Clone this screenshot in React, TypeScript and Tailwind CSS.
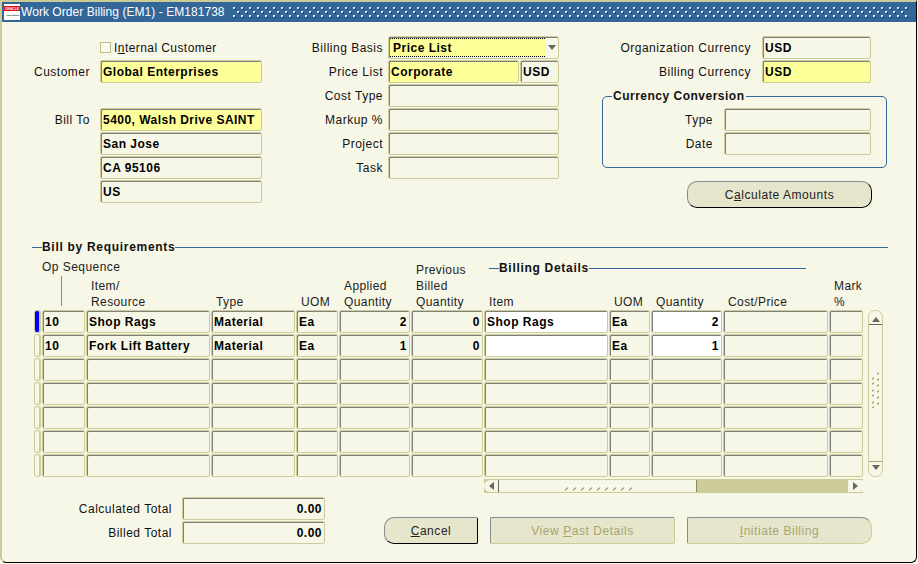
import type { ReactNode } from 'react'

const columns = [43, 124, 84, 42, 71, 72, 124, 41, 71, 105, 34]
const colAlign = ['', '', '', '', 'r', 'r', '', '', 'r', '', '']

const rows: string[][] = [
  ['10', 'Shop Rags', 'Material', 'Ea', '2', '0', 'Shop Rags', 'Ea', '2', '', ''],
  ['10', 'Fork Lift Battery', 'Material', 'Ea', '1', '0', '', 'Ea', '1', '', ''],
  ['', '', '', '', '', '', '', '', '', '', ''],
  ['', '', '', '', '', '', '', '', '', '', ''],
  ['', '', '', '', '', '', '', '', '', '', ''],
  ['', '', '', '', '', '', '', '', '', '', ''],
  ['', '', '', '', '', '', '', '', '', '', ''],
]

function Field({
  value,
  width,
  bg = 'bg-[#f7f7e7]',
  right,
  tight,
}: {
  value?: string
  width: number
  bg?: string
  right?: boolean
  tight?: boolean
}) {
  return (
    <div
      style={{ width }}
      className={`h-[23px] shrink-0 overflow-hidden whitespace-nowrap rounded-[2px] border border-[#cccc99] px-[2px] text-[12px] font-bold leading-[22px] text-black shadow-[inset_1px_1px_0_#7f7f7f] ${bg} ${right ? 'text-right' : ''} ${tight ? 'tracking-[0.47px]' : 'tracking-[0.5px]'}`}
    >
      {value}
    </div>
  )
}

function Row({
  label,
  labelWidth,
  gap,
  children,
}: {
  label?: string
  labelWidth: number
  gap: number
  children: ReactNode
}) {
  return (
    <div className="flex h-[23px] items-center">
      <div style={{ width: labelWidth, marginRight: gap }} className="shrink-0 whitespace-nowrap text-right text-[12px] tracking-[0.5px] text-[#111]">
        {label}
      </div>
      {children}
    </div>
  )
}

function HeadCell({ width, lines }: { width: number; lines: string[] }) {
  return (
    <div style={{ width }} className="shrink-0 whitespace-nowrap pl-[5px] text-[12px] leading-[16px] tracking-[0.4px] text-[#222]">
      {lines.map((l) => (
        <div key={l}>{l}</div>
      ))}
    </div>
  )
}

function Arrow({ dir }: { dir: 'up' | 'down' | 'left' | 'right' }) {
  const points = {
    up: '0,5 8,5 4,0',
    down: '0,0 8,0 4,5',
    left: '5,0 5,8 0,4',
    right: '0,0 0,8 5,4',
  }[dir]
  const size = dir === 'up' || dir === 'down' ? 'h-[5px] w-[8px]' : 'h-[8px] w-[5px]'
  const box = dir === 'up' || dir === 'down' ? '0 0 8 5' : '0 0 5 8'
  return (
    <svg viewBox={box} className={size}>
      <polygon points={points} fill="#666660" />
    </svg>
  )
}

function GripH() {
  const xs = [0, 8, 16, 24, 32, 40, 48, 56, 64]
  return (
    <svg width="68" height="6" viewBox="0 0 68 6">
      {xs.map((x) => (
        <path key={x} d={`M${x + 1} 5h1v-1h1v-1h1`} stroke="#8a8a5c" fill="none" strokeWidth="1" />
      ))}
      {xs.slice(0, 8).map((x) => (
        <rect key={x} x={x + 5} y="0" width="2" height="2" fill="#ffffff" />
      ))}
    </svg>
  )
}

function GripV() {
  const ys = [0, 12, 24]
  return (
    <svg width="9" height="36" viewBox="0 0 9 36">
      {ys.map((y) => (
        <g key={y}>
          <path d={`M1 ${y + 7}h1v-1h1`} stroke="#8a8a5c" fill="none" />
          <path d={`M6 ${y + 2}h1v-1h1`} stroke="#8a8a5c" fill="none" />
          <path d={`M1 ${y + 12}h1v-1h1`} stroke="#8a8a5c" fill="none" />
          <path d={`M6 ${y + 8}h1v-1h1`} stroke="#8a8a5c" fill="none" />
        </g>
      ))}
    </svg>
  )
}

function TitleTexture() {
  return (
    <svg className="h-[11px] min-w-0 flex-1" aria-hidden="true">
      <defs>
        <pattern id="title-dots" width="8" height="8" patternUnits="userSpaceOnUse">
          <rect x="0" y="0" width="2" height="2" fill="#eef2f6" />
          <rect x="2" y="2" width="1" height="1" fill="#10233d" />
          <rect x="1" y="1" width="1" height="1" fill="#8fa6c2" />
          <rect x="4" y="4" width="2" height="2" fill="#eef2f6" />
          <rect x="6" y="6" width="1" height="1" fill="#10233d" />
          <rect x="5" y="5" width="1" height="1" fill="#8fa6c2" />
        </pattern>
      </defs>
      <rect width="100%" height="100%" fill="url(#title-dots)" />
    </svg>
  )
}

export default function App() {
  return (
    <div className="h-[564px] w-[918px] overflow-hidden bg-[#f7f7e7] font-['Liberation_Sans',Arial,sans-serif]">
      <div className="flex h-[563px] w-[917px] flex-col overflow-hidden rounded-b-[6px] border-r border-b border-l-2 border-t-2 border-r-black border-b-black border-l-[#cccc99] border-t-[#cccc99] bg-[#f7f7e7]">
        {/* title bar */}
        <div className="flex h-[20px] shrink-0 items-center bg-[#336699] pr-[8px] pl-[2px]">
          <svg width="16" height="16" viewBox="0 0 16 16" className="shrink-0">
            <rect width="16" height="16" fill="#ffffff" />
            <rect x="0" y="2" width="16" height="5" fill="#e01010" />
            <text x="1" y="6" fontSize="3.6" fontWeight="700" fill="#ffffff" fontFamily="Liberation Sans" textLength="14" lengthAdjust="spacingAndGlyphs">
              ORACLE
            </text>
            <text x="2" y="12" fontSize="2.2" fontWeight="700" fill="#222222" fontFamily="Liberation Sans">
              Applications
            </text>
          </svg>
          <span className="ml-[1px] whitespace-nowrap text-[12px] tracking-[0.05px] text-white">Work Order Billing (EM1) - EM181738</span>
          <div className="ml-[8px] flex min-w-0 flex-1 items-center">
            <TitleTexture />
          </div>
        </div>

        {/* header form */}
        <div className="flex shrink-0 pt-[14px] pl-0">
          <div className="flex w-[260px] shrink-0 flex-col gap-[1px]">
            <div className="flex h-[23px] items-center pl-[98px]">
              <span className="mr-[3px] h-[11px] w-[11px] border border-[#bdbd85] bg-[#fbfbf3]" />
              <span className="whitespace-nowrap text-[12px] tracking-[0.43px] text-[#111]">
                I<span className="underline">n</span>ternal Customer
              </span>
            </div>
            <Row label="Customer" labelWidth={88} gap={10}>
              <Field value="Global Enterprises" width={162} bg="bg-[#ffff99]" />
            </Row>
            <div className="h-[23px]" />
            <Row label="Bill To" labelWidth={88} gap={10}>
              <Field value="5400, Walsh Drive SAINT" width={162} bg="bg-[#ffff99]" tight />
            </Row>
            <Row labelWidth={88} gap={10}>
              <Field value="San Jose" width={162} />
            </Row>
            <Row labelWidth={88} gap={10}>
              <Field value="CA 95106" width={162} />
            </Row>
            <Row labelWidth={88} gap={10}>
              <Field value="US" width={162} />
            </Row>
          </div>

          <div className="flex w-[297px] shrink-0 flex-col gap-[1px]">
            <Row label="Billing Basis" labelWidth={121} gap={5}>
              <div className="flex h-[23px] w-[171px] items-center rounded-[2px] border border-[#cccc99] bg-[#f7f7e7] pl-[1px] shadow-[inset_1px_1px_0_#7f7f7f]">
                <div className="h-[19px] w-[155px] border-y border-dotted border-black bg-[#ffff99] pl-[3px] text-[12px] font-bold leading-[18px] tracking-[0.5px]">
                  Price List
                </div>
                <div className="flex flex-1 justify-center">
                  <Arrow dir="down" />
                </div>
              </div>
            </Row>
            <Row label="Price List" labelWidth={121} gap={5}>
              <div className="flex gap-[1px]">
                <Field value="Corporate" width={131} bg="bg-[#ffff99]" />
                <Field value="USD" width={39} />
              </div>
            </Row>
            <Row label="Cost Type" labelWidth={121} gap={5}>
              <Field width={171} />
            </Row>
            <Row label="Markup %" labelWidth={121} gap={5}>
              <Field width={171} />
            </Row>
            <Row label="Project" labelWidth={121} gap={5}>
              <Field width={171} />
            </Row>
            <Row label="Task" labelWidth={121} gap={5}>
              <Field width={171} />
            </Row>
          </div>

          <div className="flex shrink-0 flex-col gap-[1px]">
            <Row label="Organization Currency" labelWidth={192} gap={11}>
              <Field value="USD" width={109} />
            </Row>
            <Row label="Billing Currency" labelWidth={192} gap={11}>
              <Field value="USD" width={109} bg="bg-[#ffff99]" />
            </Row>
            <div className="relative mt-[12px] ml-[43px] flex h-[72px] w-[285px] flex-col gap-[1px] rounded-[5px] border border-[#336699] pt-[11px]">
              <span className="absolute top-[-8px] left-[9px] bg-[#f7f7e7] px-[1px] text-[12px] font-bold leading-[14px] tracking-[0.5px] text-[#111]">
                Currency Conversion
              </span>
              <Row label="Type" labelWidth={110} gap={11}>
                <Field width={147} />
              </Row>
              <Row label="Date" labelWidth={110} gap={11}>
                <Field width={147} />
              </Row>
            </div>
            <button className="mt-[12px] ml-[128px] h-[27px] w-[185px] rounded-[10px] border border-t-[#8a8a8a] border-r-black border-b-black border-l-[#8a8a8a] bg-[#e6e6cc] text-[12px] tracking-[0.55px] text-[#222]">
              C<span className="underline">a</span>lculate Amounts
            </button>
          </div>
        </div>

        {/* requirements section */}
        <div className="mt-[32px] flex h-[14px] shrink-0 items-center pl-[30px]">
          <span className="h-px w-[10px] bg-[#336699]" />
          <span className="whitespace-nowrap text-[12px] font-bold leading-[14px] tracking-[0.7px] text-[#111]">Bill by Requirements</span>
          <span className="h-px w-[713px] bg-[#336699]" />
        </div>

        <div className="flex h-[56px] shrink-0 items-end pl-[40px]">
          <div className="flex h-full items-end gap-[1px]">
            <div style={{ width: columns[0] }} className="flex h-full shrink-0 flex-col justify-end whitespace-nowrap text-[12px] leading-[16px] tracking-[0.45px] text-[#222]">
              <span>Op Sequence</span>
              <span className="mt-[1px] mb-[4px] ml-[19px] h-[30px] w-px bg-[#8a8a8a]" />
            </div>
            <HeadCell width={columns[1]} lines={['Item/', 'Resource']} />
            <HeadCell width={columns[2]} lines={['Type']} />
            <HeadCell width={columns[3]} lines={['UOM']} />
            <HeadCell width={columns[4]} lines={['Applied', 'Quantity']} />
            <HeadCell width={columns[5]} lines={['Previous', 'Billed', 'Quantity']} />
          </div>
          <div className="ml-[1px] flex h-full flex-col">
            <div className="mt-[6px] flex h-[16px] items-center pl-[5px]">
              <span className="h-px w-[10px] bg-[#336699]" />
              <span className="whitespace-nowrap text-[12px] font-bold tracking-[0.7px] text-[#111]">Billing Details</span>
              <span className="h-px w-[217px] bg-[#336699]" />
            </div>
            <div className="mt-[2px] flex flex-1 items-end gap-[1px]">
              <HeadCell width={columns[6]} lines={['Item']} />
              <HeadCell width={columns[7]} lines={['UOM']} />
              <HeadCell width={columns[8]} lines={['Quantity']} />
              <HeadCell width={columns[9]} lines={['Cost/Price']} />
              <HeadCell width={columns[10]} lines={['Mark', '%']} />
            </div>
          </div>
        </div>

        <div className="flex shrink-0 pl-[32px]">
          <div className="flex flex-col gap-[1px]">
            {rows.map((row, i) => (
              <div key={i} className="flex gap-[1px]">
                <div className={`h-[23px] w-[7px] shrink-0 rounded-[3px] border border-r-2 border-[#cccc99] ${i === 0 ? 'bg-[#0000ff]' : 'bg-[#f7f7e7]'}`} />
                {row.map((cell, c) => (
                  <Field
                    key={c}
                    value={cell}
                    width={columns[c]}
                    right={colAlign[c] === 'r'}
                    bg={cell !== '' && (c === 6 || c === 8) || (i === 1 && c === 6) ? 'bg-white' : 'bg-[#f7f7e7]'}
                  />
                ))}
              </div>
            ))}
          </div>
          {/* vertical scrollbar */}
          <div className="ml-[5px] flex h-[167px] w-[15px] flex-col items-center rounded-[7px] border border-[#cccc99]">
            <div className="flex h-[14px] w-full shrink-0 items-end justify-center border-b border-[#666660] pb-[2px]">
              <Arrow dir="up" />
            </div>
            <div className="flex min-h-0 w-full flex-1 items-center justify-center pb-[6px]">
              <GripV />
            </div>
            <div className="flex h-[15px] w-full shrink-0 items-start justify-center border-t border-[#a5a56f] pt-[3px]">
              <Arrow dir="down" />
            </div>
          </div>
        </div>

        {/* horizontal scrollbar */}
        <div className="mt-[2px] ml-[482px] flex h-[14px] w-[379px] shrink-0 items-stretch bg-[#cccc99] py-px">
          <div className="flex w-[15px] shrink-0 items-center justify-center rounded-l-[6px] border-r border-[#666660] bg-[#f7f7e7]">
            <Arrow dir="left" />
          </div>
          <div className="flex w-[198px] shrink-0 items-center justify-center border-r border-[#8a8a5c] bg-[#f7f7e7] pt-[3px]">
            <GripH />
          </div>
          <div className="flex-1" />
          <div className="flex w-[15px] shrink-0 items-center justify-center rounded-r-[2px] bg-[#f7f7e7]">
            <Arrow dir="right" />
          </div>
        </div>

        {/* footer */}
        <div className="flex min-h-0 flex-1 pt-[4px]">
          <div className="flex w-[323px] shrink-0 flex-col gap-[1px]">
            <Row label="Calculated Total" labelWidth={170} gap={10}>
              <Field value="0.00" width={143} right />
            </Row>
            <Row label="Billed Total" labelWidth={170} gap={10}>
              <Field value="0.00" width={143} right />
            </Row>
          </div>
          <div className="mt-[20px] ml-[59px] flex h-[27px] gap-[12px]">
            <button className="w-[94px] rounded-l-[10px] rounded-r-[2px] border border-t-[#8a8a8a] border-r-black border-b-black border-l-[#8a8a8a] bg-[#e6e6cc] text-[12px] tracking-[0.55px] text-[#222]">
              <span className="underline">C</span>ancel
            </button>
            <button className="w-[185px] rounded-[2px] border border-t-[#8a8a8a] border-r-[#cccc99] border-b-[#cccc99] border-l-[#8a8a8a] bg-[#e6e6cc] text-[12px] tracking-[0.55px] text-[#a5a56f]">
              View <span className="underline">P</span>ast Details
            </button>
            <button className="w-[185px] rounded-l-[2px] rounded-r-[10px] border border-t-[#8a8a8a] border-r-[#cccc99] border-b-[#cccc99] border-l-[#8a8a8a] bg-[#e6e6cc] text-[12px] tracking-[0.55px] text-[#a5a56f]">
              <span className="underline">I</span>nitiate Billing
            </button>
          </div>
        </div>
      </div>
    </div>
  )
}
